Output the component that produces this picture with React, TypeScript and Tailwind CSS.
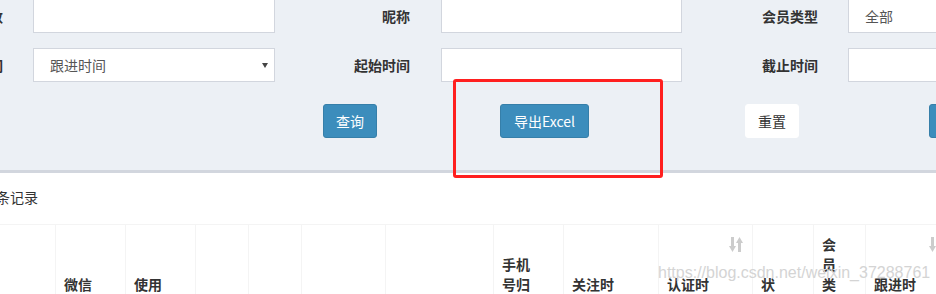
import React from "react";

const FONT = "font-['Noto_Sans_CJK_SC','Noto_Sans',sans-serif]";

function Label({ text, w, pr }: { text: string; w: string; pr: string }) {
  return (
    <div className={`${w} ${pr} shrink-0 text-right font-bold text-[14px] leading-[34px] text-[#333]`}>
      {text}
    </div>
  );
}

function Input({ w, value }: { w: string; value?: string }) {
  return (
    <div className={`${w} shrink-0 h-[34px] bg-white border border-[#d2d6de] pl-[16px] text-[14px] leading-[32px] text-[#555]`}>
      {value}
    </div>
  );
}

function SortBoth() {
  return (
    <svg width="14" height="15" viewBox="0 0 14 15" className="block">
      <rect x="2" y="0" width="3" height="10" fill="#cccccc" />
      <polygon points="0,9 7,9 3.5,15" fill="#cccccc" />
      <rect x="9" y="5" width="3" height="10" fill="#cccccc" />
      <polygon points="7,6 14,6 10.5,0" fill="#cccccc" />
    </svg>
  );
}

function SortDesc() {
  return (
    <svg width="14" height="15" viewBox="0 0 14 15" className="block">
      <rect x="2" y="0" width="3" height="10" fill="#cccccc" />
      <polygon points="0,9 7,9 3.5,15" fill="#cccccc" />
    </svg>
  );
}

type Col = { w: string; lines: string[]; sort?: "both" | "desc" };

const cols: Col[] = [
  { w: "w-[56px]", lines: ["序号"] },
  { w: "w-[70px]", lines: ["微信", "昵称"] },
  { w: "w-[70px]", lines: ["使用", "状态"] },
  { w: "w-[53px]", lines: ["性别"] },
  { w: "w-[53px]", lines: ["年龄"] },
  { w: "w-[84px]", lines: ["手机号"] },
  { w: "w-[108px]", lines: ["微信号"] },
  { w: "w-[70px]", lines: ["手机", "号归", "属地"] },
  { w: "w-[95px]", lines: ["关注时", "间"] },
  { w: "w-[94px]", lines: ["认证时", "间"], sort: "both" },
  { w: "w-[61px]", lines: ["状", "态"] },
  { w: "w-[52px]", lines: ["会", "员", "类", "型"] },
  { w: "w-[87px]", lines: ["跟进时", "间"], sort: "desc" },
];

export default function App() {
  return (
    <div className={`relative w-[936px] h-[294px] overflow-hidden bg-white ${FONT}`}>
      {/* filter area */}
      <div className="h-[170px] bg-[#ecf0f5] overflow-hidden">
        <div className="mt-[-1px] ml-[-134px] flex">
          <Label text="参数" w="w-[167px]" pr="pr-[30px]" />
          <Input w="w-[242px]" />
          <Label text="昵称" w="w-[166px]" pr="pr-[31px]" />
          <Input w="w-[241px]" />
          <Label text="会员类型" w="w-[166px]" pr="pr-[30px]" />
          <Input w="w-[241px]" value="全部" />
        </div>
        <div className="mt-[15px] ml-[-134px] flex">
          <Label text="时间" w="w-[167px]" pr="pr-[30px]" />
          <div className="relative w-[242px] shrink-0 h-[34px] bg-white border border-[#d2d6de] pl-[16px] text-[14px] leading-[32px] text-[#555] flex items-center justify-between pr-[6px]">
            <span>跟进时间</span>
            <svg width="6" height="5" viewBox="0 0 6 5" className="block">
              <polygon points="0,0 6,0 3,5" fill="#444" />
            </svg>
          </div>
          <Label text="起始时间" w="w-[166px]" pr="pr-[31px]" />
          <Input w="w-[241px]" />
          <Label text="截止时间" w="w-[166px]" pr="pr-[30px]" />
          <Input w="w-[241px]" />
        </div>
        <div className="mt-[22px] flex">
          <button className="ml-[323px] shrink-0 w-[54px] h-[34px] rounded-[3px] bg-[#3c8dbc] border border-[#367fa9] text-white text-[14px] leading-[32px]">
            查询
          </button>
          <button className="ml-[123px] shrink-0 w-[89px] h-[34px] rounded-[3px] bg-[#3c8dbc] border border-[#367fa9] text-white text-[14px] leading-[32px]">
            导出Excel
          </button>
          <button className="ml-[156px] shrink-0 w-[54px] h-[34px] rounded-[3px] bg-white border border-white text-[#333] text-[14px] leading-[32px]">
            重置
          </button>
          <button className="ml-[130px] shrink-0 w-[54px] h-[34px] rounded-[3px] bg-[#3c8dbc] border border-[#367fa9] text-white text-[14px] leading-[32px]">
            新增
          </button>
        </div>
      </div>

      {/* box */}
      <div className="border-t-[3px] border-[#d2d6de] bg-white">
        <div className="h-[51px] pt-[14px] ml-[-4px] text-[14px] leading-[20px] text-[#333]">条记录</div>
        <div className="flex border-t border-[#f4f4f4]">
          {cols.map((c, i) => (
            <div
              key={i}
              className={`${c.w} shrink-0 relative h-[97px] border-r border-[#f4f4f4] pl-[8px] pb-[8px] flex flex-col justify-end font-bold text-[14px] leading-[20px] text-[#333]`}
            >
              {c.lines.map((l, j) => (
                <div key={j} className="whitespace-nowrap">
                  {l}
                </div>
              ))}
              {c.sort === "both" && (
                <div className="absolute right-[9px] top-[12px]">
                  <SortBoth />
                </div>
              )}
              {c.sort === "desc" && (
                <div className="absolute right-[9px] top-[12px]">
                  <SortDesc />
                </div>
              )}
            </div>
          ))}
        </div>
      </div>

      {/* watermark */}
      <div className="absolute left-[658px] top-[264px] font-['Liberation_Sans',sans-serif] text-[16px] leading-[18px] text-[#d4d4d4] whitespace-nowrap pointer-events-none">
        https://blog.csdn.net/weixin_37288761
      </div>

      {/* red annotation */}
      <div className="absolute left-[453px] top-[79px] w-[210px] h-[99px] border-[3px] border-[#ff1f1f] rounded-[3px] pointer-events-none" />
    </div>
  );
}
